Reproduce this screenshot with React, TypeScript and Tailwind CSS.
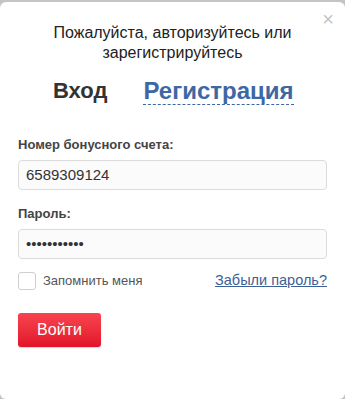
export default function App() {
  return (
    <div className="w-[345px] h-[399px] bg-[#c4c4c4] pt-[2px] font-['Liberation_Sans',Arial,sans-serif]">
      <div className="relative h-[397px] bg-white rounded-md px-[18px] pt-[21px]">
        <button className="absolute right-[11px] top-[7px] text-[20px] leading-none text-[#c4c4c4]">×</button>
        <p className="text-center text-[16px] leading-[20px] text-[#222]">
          Пожалуйста, авторизуйтесь или<br />зарегистрируйтесь
        </p>
        <div className="flex items-end gap-[36px] pl-[35px] mt-[12px] h-[30px]">
          <span className="text-[22px] font-bold text-[#333] leading-[28px]">Вход</span>
          <span className="text-[24px] font-bold text-[#3d67a5] leading-[26px] border-b border-dashed border-[#3d67a5]">Регистрация</span>
        </div>
        <label className="block mt-[30px] text-[13px] leading-[19px] font-bold text-[#444]">Номер бонусного счета:</label>
        <div className="mt-[6px] h-[30px] rounded-[4px] border border-[#dcdcdc] bg-[#fbfbfc] px-[7px] flex items-center text-[15px] text-[#333]">
          6589309124
        </div>
        <label className="block mt-[14px] text-[13px] leading-[19px] font-bold text-[#444]">Пароль:</label>
        <div className="mt-[6px] h-[30px] rounded-[4px] border border-[#dcdcdc] bg-[#fbfbfc] px-[7px] flex items-center text-[15px] text-[#333]">
          •••••••••••
        </div>
        <div className="mt-[11px] h-[21px] flex items-center justify-between">
          <div className="flex items-center gap-[7px]">
            <span className="w-[18px] h-[18px] rounded-[3px] border border-[#cfcfcf] bg-white" />
            <span className="text-[13px] text-[#555]">Запомнить меня</span>
          </div>
          <a className="text-[14.5px] text-[#3d5f98] underline">Забыли пароль?</a>
        </div>
        <button className="mt-[22px] w-[83px] h-[34px] rounded-[3px] bg-gradient-to-b from-[#f8434e] to-[#e1112a] text-white text-[16px] shadow-[0_1px_1px_rgba(0,0,0,0.15)]">
          Войти
        </button>
      </div>
    </div>
  );
}
